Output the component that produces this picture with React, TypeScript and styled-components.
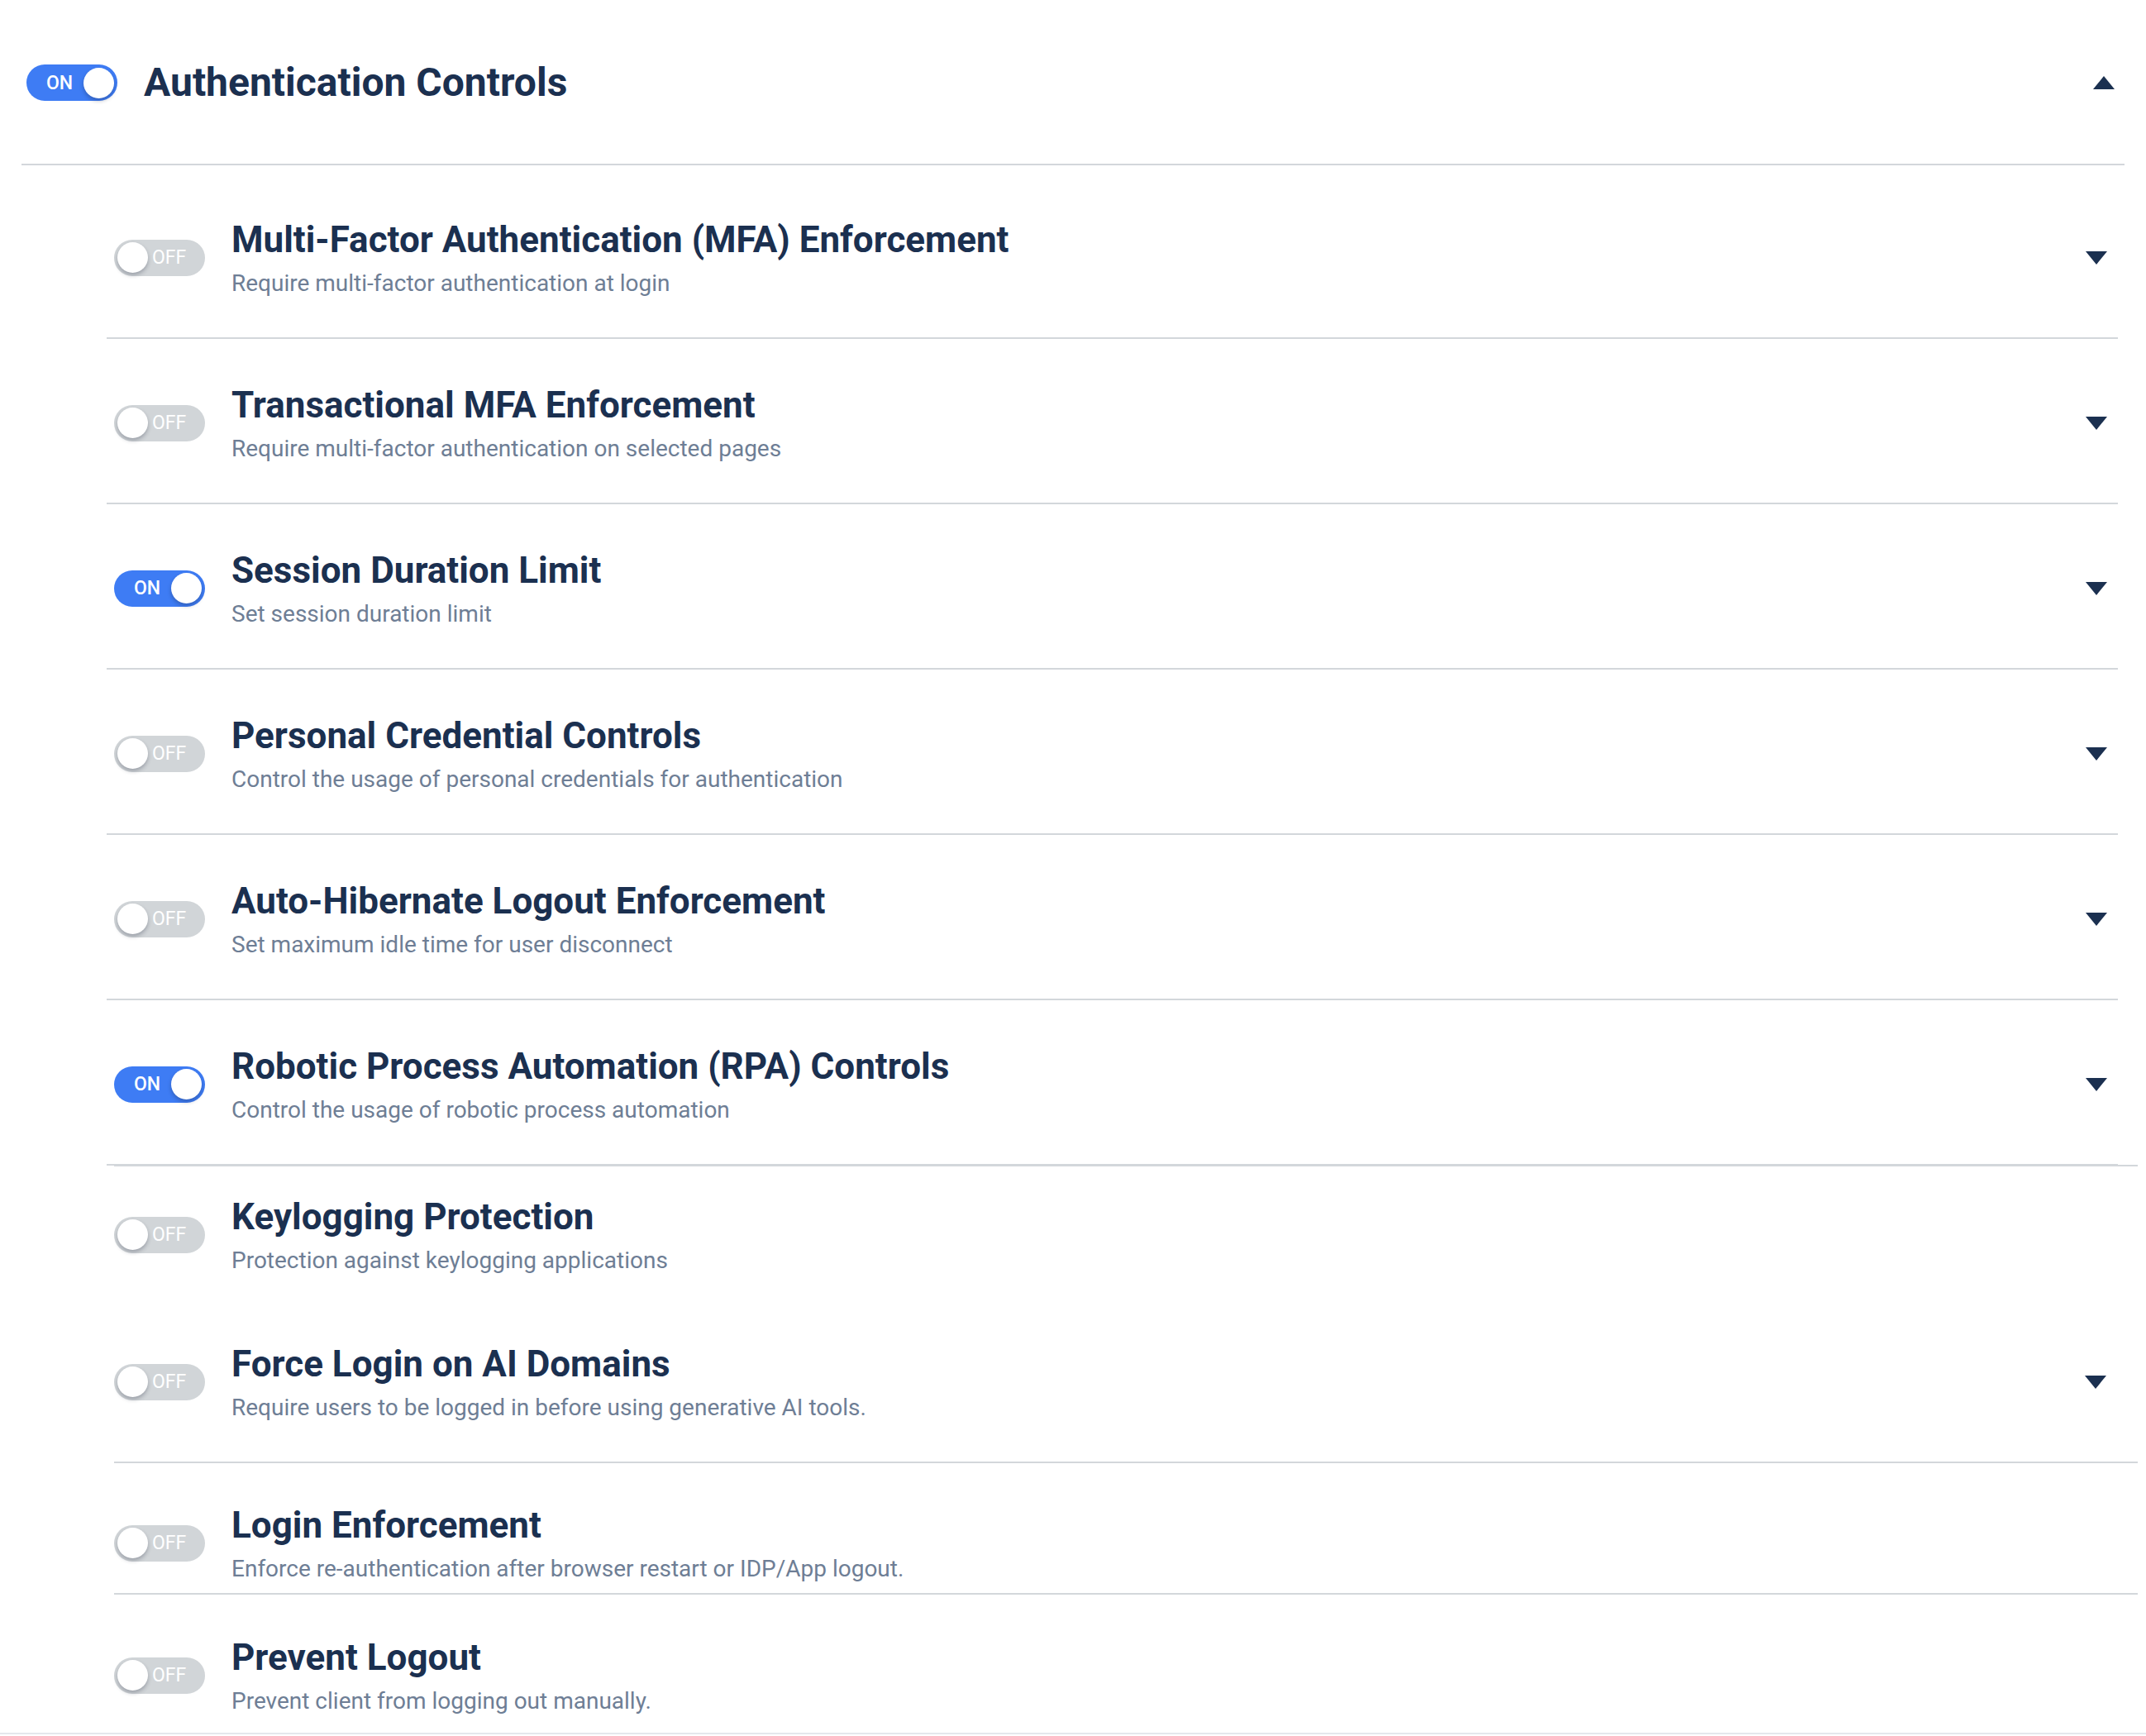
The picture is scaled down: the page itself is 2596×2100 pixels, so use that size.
import React, { useState } from "react";
import styled, { createGlobalStyle } from "styled-components";

const GlobalStyle = createGlobalStyle`
  html, body {
    margin: 0;
    padding: 0;
    background: #ffffff;
  }

  body {
    font-family: Roboto, "Noto Sans", "Liberation Sans", sans-serif;
    -webkit-font-smoothing: antialiased;
  }

  * {
    box-sizing: border-box;
  }
`;

const Page = styled.div`
  width: 2596px;
  display: flex;
  flex-direction: column;
`;

const Header = styled.div`
  display: flex;
  align-items: center;
  margin: 0 26px;
  padding: 70px 12px 68px 6px;
  border-bottom: 2px solid #d3d7db;
`;

const SectionTitle = styled.h1`
  flex: 1;
  margin: 0 0 0 32px;
  font-size: 48px;
  line-height: 60px;
  font-weight: 700;
  color: #1b3050;
`;

const PolicyList = styled.div<{ $left: number; $right: number; $top?: boolean }>`
  display: flex;
  flex-direction: column;
  margin: 0 ${(p) => p.$right}px 0 ${(p) => p.$left}px;
  padding-top: ${(p) => (p.$top ? 0 : 10)}px;
  ${(p) => p.$top && "border-top: 2px solid #d3d7db; margin-top: -1px;"}
`;

const Row = styled.div<{ $top: number; $bottom: number; $right: number; $left: number; $divider: boolean }>`
  display: flex;
  align-items: center;
  padding: ${(p) => `${p.$top}px ${p.$right}px ${p.$bottom}px ${p.$left}px`};
  border-bottom: ${(p) => (p.$divider ? "2px solid #d3d7db" : "none")};
`;

/* text sits a touch below the switch's centre line */
const TextBlock = styled.div`
  flex: 1;
  margin: 2px 0 -2px 32px;
`;

const PolicyName = styled.div`
  font-size: 44px;
  line-height: 52px;
  font-weight: 700;
  color: #1b3050;
`;

const PolicyHint = styled.div`
  margin-top: 7px;
  font-size: 28px;
  line-height: 40px;
  font-weight: 400;
  color: #6e7e95;
`;

const Track = styled.button<{ $on: boolean }>`
  flex-shrink: 0;
  display: flex;
  align-items: center;
  width: 110px;
  height: 44px;
  border: none;
  border-radius: 22px;
  padding: ${(p) => (p.$on ? "0 4px 0 24px" : "0 0 0 4px")};
  background: ${(p) => (p.$on ? "#3e7cf4" : "#d1d5d8")};
  cursor: pointer;
`;

const Knob = styled.span<{ $on: boolean }>`
  width: 37px;
  height: 37px;
  border-radius: 50%;
  background: #ffffff;
  margin-left: ${(p) => (p.$on ? "auto" : "0")};
  box-shadow: 0 3px 5px rgba(20, 30, 50, 0.28);
`;

const TrackLabel = styled.span<{ $on: boolean }>`
  margin-left: ${(p) => (p.$on ? "0" : "5px")};
  font-family: Roboto, sans-serif;
  font-size: 23px;
  line-height: 23px;
  font-weight: ${(p) => (p.$on ? 500 : 400)};
  color: #ffffff;
`;

const CaretButton = styled.button`
  flex-shrink: 0;
  display: flex;
  width: 26px;
  height: 16px;
  padding: 0;
  border: none;
  background: none;
  cursor: pointer;
`;

const PanelFoot = styled.div`
  height: 2px;
  background: #e4e8ec;
`;

type Spacing = { top: number; bottom: number; divider: boolean };

type Policy = {
  name: string;
  hint: string;
  on: boolean;
  expandable: boolean;
  spacing: Spacing;
};

const regular: Spacing = { top: 52, bottom: 47, divider: true };

const corePolicies: Policy[] = [
  { name: "Multi-Factor Authentication (MFA) Enforcement", hint: "Require multi-factor authentication at login", on: false, expandable: true, spacing: regular },
  { name: "Transactional MFA Enforcement", hint: "Require multi-factor authentication on selected pages", on: false, expandable: true, spacing: regular },
  { name: "Session Duration Limit", hint: "Set session duration limit", on: true, expandable: true, spacing: regular },
  { name: "Personal Credential Controls", hint: "Control the usage of personal credentials for authentication", on: false, expandable: true, spacing: regular },
  { name: "Auto-Hibernate Logout Enforcement", hint: "Set maximum idle time for user disconnect", on: false, expandable: true, spacing: regular },
  { name: "Robotic Process Automation (RPA) Controls", hint: "Control the usage of robotic process automation", on: true, expandable: true, spacing: regular },
];

const extraPolicies: Policy[] = [
  { name: "Keylogging Protection", hint: "Protection against keylogging applications", on: false, expandable: false, spacing: { top: 33, bottom: 27, divider: false } },
  { name: "Force Login on AI Domains", hint: "Require users to be logged in before using generative AI tools.", on: false, expandable: true, spacing: regular },
  { name: "Login Enforcement", hint: "Enforce re-authentication after browser restart or IDP/App logout.", on: false, expandable: false, spacing: { top: 47, bottom: 11, divider: true } },
  { name: "Prevent Logout", hint: "Prevent client from logging out manually.", on: false, expandable: false, spacing: { top: 48, bottom: 20, divider: false } },
];

const Caret: React.FC<{ up?: boolean }> = ({ up }) => (
  <CaretButton aria-label={up ? "Collapse" : "Expand"}>
    <svg width="26" height="16" viewBox="0 0 26 16">
      <polygon points={up ? "0,16 13,0 26,16" : "0,0 26,0 13,16"} fill="#1b3050" />
    </svg>
  </CaretButton>
);

const Switch: React.FC<{ on: boolean; onToggle: () => void }> = ({ on, onToggle }) => (
  <Track $on={on} onClick={onToggle} role="switch" aria-checked={on}>
    {on ? (
      <>
        <TrackLabel $on>ON</TrackLabel>
        <Knob $on />
      </>
    ) : (
      <>
        <Knob $on={false} />
        <TrackLabel $on={false}>OFF</TrackLabel>
      </>
    )}
  </Track>
);

const PolicyRow: React.FC<{ policy: Policy; left: number; right: number }> = ({ policy, left, right }) => {
  const [on, setOn] = useState(policy.on);
  const { top, bottom, divider } = policy.spacing;

  return (
    <Row $top={top} $bottom={bottom} $left={left} $right={right} $divider={divider}>
      <Switch on={on} onToggle={() => setOn(!on)} />
      <TextBlock>
        <PolicyName>{policy.name}</PolicyName>
        <PolicyHint>{policy.hint}</PolicyHint>
      </TextBlock>
      {policy.expandable && <Caret />}
    </Row>
  );
};

const App: React.FC = () => {
  const [enabled, setEnabled] = useState(true);

  return (
    <>
      <GlobalStyle />
      <Page>
        <Header>
          <Switch on={enabled} onToggle={() => setEnabled(!enabled)} />
          <SectionTitle>Authentication Controls</SectionTitle>
          <Caret up />
        </Header>

        <PolicyList $left={129} $right={34}>
          {corePolicies.map((p) => (
            <PolicyRow key={p.name} policy={p} left={9} right={13} />
          ))}
        </PolicyList>

        <PolicyList $left={138} $right={10} $top>
          {extraPolicies.map((p) => (
            <PolicyRow key={p.name} policy={p} left={0} right={38} />
          ))}
        </PolicyList>

        <PanelFoot />
      </Page>
    </>
  );
};

export default App;
